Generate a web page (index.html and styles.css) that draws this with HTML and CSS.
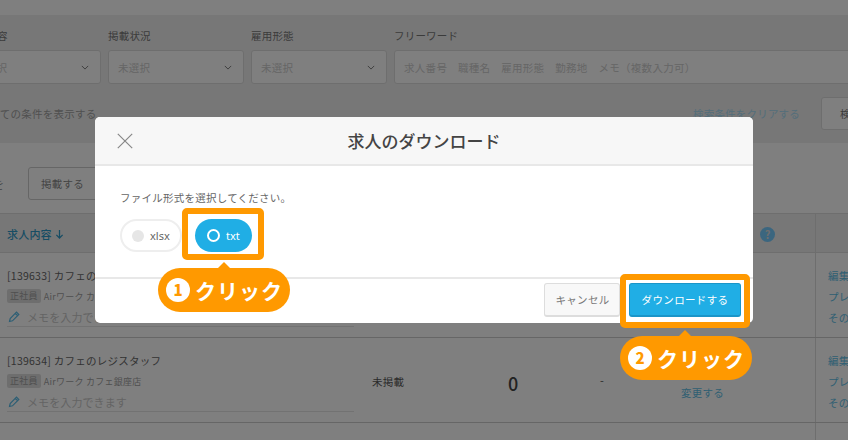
FILE: index.html
```html
<!DOCTYPE html>
<html lang="ja">
<head>
<meta charset="utf-8">
<title>求人のダウンロード</title>
<link rel="stylesheet" href="styles.css">
</head>
<body>
<div class="page">
  <div class="topband"></div>
  <section class="filters">
    <div class="field-row">
      <div class="field f1"><label class="field-label">求人内容</label><div class="select"><span>未選択</span><svg class="chev" viewBox="0 0 10 6"><path d="M1 1l4 4 4-4"/></svg></div></div>
      <div class="field f2"><label class="field-label">掲載状況</label><div class="select"><span>未選択</span><svg class="chev" viewBox="0 0 10 6"><path d="M1 1l4 4 4-4"/></svg></div></div>
      <div class="field f2"><label class="field-label">雇用形態</label><div class="select"><span>未選択</span><svg class="chev" viewBox="0 0 10 6"><path d="M1 1l4 4 4-4"/></svg></div></div>
      <div class="field f3"><label class="field-label">フリーワード</label><div class="select free"><span>求人番号　職種名　雇用形態　勤務地　メモ（複数入力可）</span></div></div>
    </div>
    <div class="filter-actions">
      <span class="showall">全ての条件を表示する</span>
      <span class="clear">検索条件をクリアする</span>
      <span class="search-btn">検索する</span>
    </div>
  </section>
  <section class="toolbar">
    <span class="tool-label">選択中の求人を</span>
    <span class="tool-btn">掲載する</span>
  </section>
  <section class="table">
    <div class="row head">
      <div class="c-main head-title">求人内容 <svg class="arrow" viewBox="0 0 10 11"><path d="M5 1v9M1.500 6.500L5 10l3.500-3.500"/></svg></div>
      <div class="c-status"></div><div class="c-num"></div><div class="c-dash"></div>
      <div class="c-change head-help"><span class="head-count">掲載数：</span><span class="help">?</span></div>
      <div class="c-ops"></div>
    </div>
    <div class="row">
      <div class="c-main">
        <div class="job-title">[139633] カフェのレジスタッフ</div>
        <div class="job-meta"><span class="tag">正社員</span>Airワーク カフェ銀座店</div>
        <div class="memo"><svg class="pencil" viewBox="0 0 12 12"><path d="M1.500 10.500l.7-3L8.500 1.200l2.300 2.300-6.300 6.300zM7.300 2.500l2.200 2.200"/></svg>メモを入力できます</div>
      </div>
      <div class="c-status">未掲載</div><div class="c-num">0</div><div class="c-dash">-</div>
      <div class="c-change"><span class="link">変更する</span></div>
      <div class="c-ops"><span class="link">編集する</span><span class="link">プレビュー</span><span class="link">その他</span></div>
    </div>
    <div class="row">
      <div class="c-main">
        <div class="job-title">[139634] カフェのレジスタッフ</div>
        <div class="job-meta"><span class="tag">正社員</span>Airワーク カフェ銀座店</div>
        <div class="memo"><svg class="pencil" viewBox="0 0 12 12"><path d="M1.500 10.500l.7-3L8.500 1.200l2.300 2.300-6.300 6.300zM7.300 2.500l2.200 2.200"/></svg>メモを入力できます</div>
      </div>
      <div class="c-status">未掲載</div><div class="c-num">0</div><div class="c-dash">-</div>
      <div class="c-change"><span class="link">変更する</span></div>
      <div class="c-ops"><span class="link">編集する</span><span class="link">プレビュー</span><span class="link">その他</span></div>
    </div>
    <div class="row last"><div class="c-ops"></div></div>
  </section>
</div>
<div class="scrim"></div>
<div class="modal">
  <header class="modal-head">
    <svg class="close" viewBox="0 0 16 16"><path d="M.8.800l14.400 14.400M15.200.800L.8 15.200"/></svg>
    <h1 class="modal-title">求人のダウンロード</h1>
  </header>
  <div class="modal-body">
    <p class="prompt">ファイル形式を選択してください。</p>
    <div class="pills">
      <span class="pill off"><i class="dot"></i>xlsx</span>
      <span class="pill on"><i class="ring"></i>txt</span>
    </div>
  </div>
  <footer class="modal-foot">
    <span class="btn cancel">キャンセル</span>
    <span class="btn primary">ダウンロードする</span>
  </footer>
</div>
<div class="hl hl-one"></div>
<div class="hl hl-two"></div>
<div class="callout call-one"><b class="num">1</b>クリック</div>
<div class="callout call-two"><b class="num">2</b>クリック</div>
</body>
</html>
```
FILE: styles.css
```css
* { box-sizing: border-box; }
html, body { margin: 0; padding: 0; }
body {
  width: 848px; height: 440px; overflow: hidden; position: relative;
  background: #fff; color: #555;
  font-family: "Noto Sans CJK JP", "Noto Sans", sans-serif;
  font-size: 11px;
}
.page { width: 848px; height: 440px; overflow: hidden; }
.topband { height: 15px; background: #fff; }

.filters { height: 128px; background: #eee; padding-top: 13px; }
.field-row { display: flex; gap: 7px; margin-left: -35px; }
.field { flex: none; }
.f1 { width: 136px; }
.f2 { width: 136px; }
.f3 { width: 500px; }
.field-label { display: block; height: 22px; line-height: 16px; font-size: 10.500px; letter-spacing: .2px; color: #777; white-space: nowrap; }
.select {
  height: 34px; background: #fff; border: 1px solid #ddd; border-radius: 3px;
  display: flex; align-items: center; justify-content: space-between;
  padding: 0 11px 0 9px; color: #ccc; font-size: 10.500px; letter-spacing: .2px;
}
.select.free { border-radius: 3px 0 0 3px; justify-content: flex-start; letter-spacing: .3px; white-space: nowrap; }
.chev { width: 8px; height: 5px; fill: none; stroke: #777; stroke-width: 1.200; }

.filter-actions { display: flex; align-items: center; height: 33px; margin-top: 13px; margin-left: -11px; font-size: 10.500px; width: 960px; }
.showall { flex: none; color: #a0a0a0; letter-spacing: .25px; width: 704px; white-space: nowrap; }
.clear { flex: none; color: #a8dcf5; letter-spacing: .2px; white-space: nowrap; width: 128px; }
.search-btn { flex: none; width: 100px; height: 33px; line-height: 31px; padding-left: 18px; background: #fff; border: 1px solid #ddd; border-radius: 3px; color: #777; white-space: nowrap; }

.toolbar { height: 70px; background: #fff; display: flex; align-items: center; padding-top: 11px; margin-left: -73px; }
.tool-label { flex: none; width: 101px; white-space: nowrap; font-size: 11px; color: #888; }
.tool-btn { width: 100px; height: 33px; line-height: 31px; padding-left: 12px; border: 1px solid #ccc; border-radius: 3px; background: #fff; color: #888; font-size: 10.500px; letter-spacing: .25px; white-space: nowrap; }

.table { border-top: 1px solid #ddd; }
.row { display: grid; grid-template-columns: 365px 100px 106px 61px 183px 33px; height: 85px; border-bottom: 1px solid #ccc; align-items: center; }
.row.head { height: 39px; background: #eee; border-bottom: 1px solid #ddd; }
.row.last { height: 40px; border-bottom: 0; }
.row.last .c-ops { grid-column: 6; }
.c-main { padding: 15px 0 0 7px; align-self: start; }
.head-title { align-self: center; padding-top: 2px; color: #2f9ac8; font-size: 11px; font-weight: 500; display: flex; align-items: center; gap: 3px; letter-spacing: .2px; }
.arrow { width: 9px; height: 10px; fill: none; stroke: #2f9ac8; stroke-width: 1.400; }
.job-title { font-size: 10.500px; line-height: 16px; letter-spacing: .25px; color: #666; white-space: nowrap; }
.job-meta { font-size: 9px; color: #a0a0a0; margin-top: 5px; height: 14px; display: flex; align-items: center; gap: 3px; letter-spacing: .25px; white-space: nowrap; }
.tag { background: #ddd; border-radius: 2px; padding: 0 3px; height: 14px; line-height: 14px; color: #a0a0a0; }
.memo { display: flex; align-items: center; color: #c8c8c8; font-size: 11px; letter-spacing: .1px; margin-top: 7px; gap: 7px; border-bottom: 1px solid #e4e4e4; width: 346px; padding: 0 0 2px 1px; box-sizing: content-box; height: 14px; }
.pencil { width: 12px; height: 12px; fill: none; stroke: #5abde8; stroke-width: 1.200; }
.c-status { padding: 2px 0 0 7px; font-size: 10.500px; color: #555; letter-spacing: .2px; }
.c-num { font-size: 18px; font-weight: 500; color: #444; padding: 6px 0 0 43px; }
.c-dash { padding-left: 29px; font-size: 11px; color: #555; }
.c-change { padding-top: 24px; padding-left: 49px; }
.head-help { padding: 2px 40px 0 0; display: flex; justify-content: flex-end; align-items: center; white-space: nowrap; font-size: 10.500px; color: #777; gap: 6px; }
.head-count { letter-spacing: .2px; }
.link { color: #5fbfe6; font-size: 10.500px; letter-spacing: .25px; white-space: nowrap; }
.help { width: 15px; height: 15px; border-radius: 50%; background: #7cf; color: #ddd; font-size: 11px; font-weight: 700; line-height: 15px; text-align: center; flex: none; }
.c-ops { height: 100%; border-left: 1px solid #ddd; padding: 15px 0 0 12px; display: flex; flex-direction: column; gap: 5px; align-items: flex-start; }
.c-ops .link { line-height: 16px; }

.scrim { position: absolute; inset: 0; background: rgba(0,0,0,.5); }
.modal { position: absolute; left: 95px; top: 117px; width: 658px; height: 206px; background: #fff; border-radius: 5px; overflow: hidden; display: flex; flex-direction: column; }
.modal-head { height: 49px; flex: none; background: #f7f7f7; border-bottom: 2px solid #e8e8e8; display: flex; align-items: center; justify-content: center; position: relative; }
.close { position: absolute; left: 22px; top: 16px; width: 16px; height: 16px; fill: none; stroke: #888; stroke-width: 1.200; }
.modal-title { margin: 0; font-size: 17px; font-weight: 500; color: #444; }
.modal-body { flex: none; height: 113px; padding: 23px 25px 0; border-bottom: 2px solid #e8e8e8; }
.prompt { margin: 0; font-size: 10.500px; line-height: 18px; letter-spacing: .25px; color: #666; }
.pills { display: flex; gap: 13px; margin-top: 12px; }
.pill { height: 33px; border-radius: 17px; display: flex; align-items: center; font-size: 11px; font-family: "Noto Sans", sans-serif; }
.pill.off { width: 62px; border: 2px solid #eee; color: #666; padding-left: 10px; gap: 6px; }
.pill.on { width: 57px; background: #20aee5; color: #fff; padding-left: 12px; gap: 6px; }
.dot { width: 12px; height: 12px; border-radius: 50%; background: #e6e6e6; }
.ring { width: 13px; height: 13px; border-radius: 50%; border: 2px solid #fff; }
.modal-foot { flex: 1; display: flex; justify-content: flex-end; gap: 9px; padding: 4px 12px 0 0; align-items: flex-start; }
.btn { height: 34px; line-height: 32px; text-align: center; border-radius: 3px; font-size: 10.500px; }
.cancel { width: 76px; background: #f8f8f8; border: 1px solid #ddd; border-bottom-width: 2px; color: #777; letter-spacing: .3px; padding-left: 1px; }
.primary { width: 112px; background: #20aee5; color: #fff; border: 1px solid #1a95c8; border-bottom-width: 2px; letter-spacing: .35px; }

.hl { position: absolute; border: 6px solid #ff9900; border-radius: 5px; }
.hl-one { left: 182px; top: 208px; width: 82px; height: 52px; }
.hl-two { left: 620px; top: 274px; width: 130px; height: 54px; }
.callout { position: absolute; width: 132px; height: 44px; border-radius: 22px; background: #ff9900; color: #fff; font-size: 21px; font-weight: 700; display: flex; align-items: center; padding-left: 8px; gap: 5px; letter-spacing: 1px; white-space: nowrap; }
.callout::before { content: ""; position: absolute; left: 60px; top: -6px; border: 6px solid transparent; border-top: 0; border-bottom: 6px solid #ff9900; }
.call-one { left: 158px; top: 268px; }
.call-two { left: 620px; top: 336px; }
.call-two::before { left: 59px; }
.num { width: 24px; height: 24px; flex: none; border-radius: 50%; background: #fff; color: #ff9900; font-size: 15px; line-height: 24px; text-align: center; letter-spacing: 0; }
```
